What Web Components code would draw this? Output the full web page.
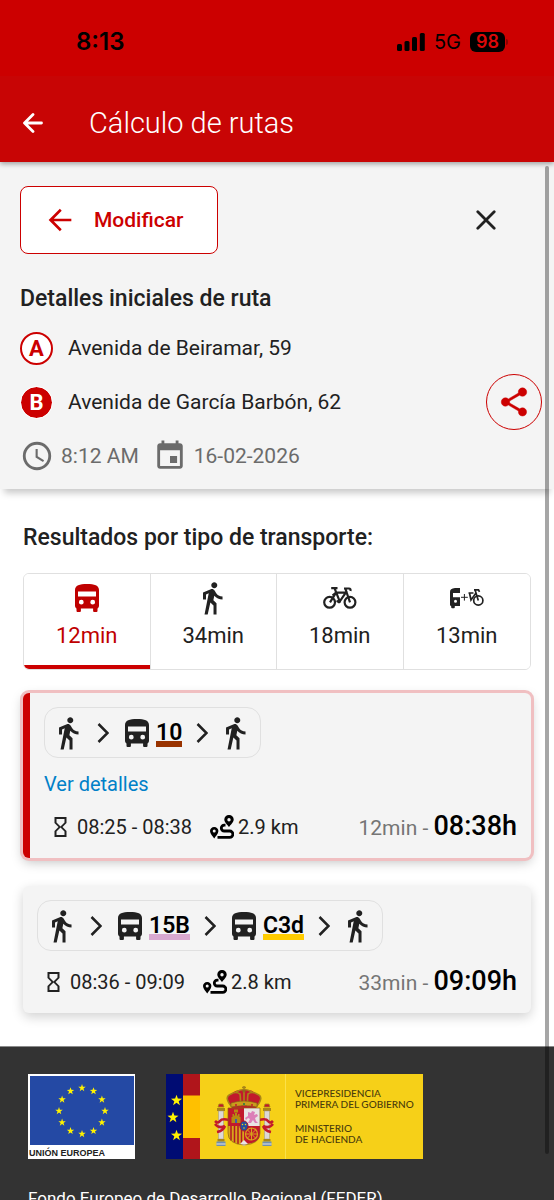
<!DOCTYPE html>
<html lang="es">
<head>
<meta charset="utf-8">
<meta name="viewport" content="width=device-width, initial-scale=1">
<title>Cálculo de rutas</title>
<style>
  html, body {
    height: 100%;
    margin: 0;
  }
  body {
    font-family: Roboto, "Liberation Sans", sans-serif;
    color: #212121;
    background: #ffffff;
    --rojo: #cc0000;
    --gris: #f4f4f4;
    --linea: #e0e0e0;
  }
</style>
</head>
<body>

<rutas-app>
  <barra-estado slot="cabecera"></barra-estado>
  <barra-titulo slot="cabecera">Cálculo de rutas</barra-titulo>

  <detalles-ruta>
    <span slot="origen">Avenida de Beiramar, 59</span>
    <span slot="destino">Avenida de García Barbón, 62</span>
    <span slot="hora">8:12 AM</span>
    <span slot="fecha">16-02-2026</span>
  </detalles-ruta>

  <resultados-ruta>
    <span slot="titulo">Resultados por tipo de transporte:</span>
    <tipo-transporte slot="tipos" icono="bus" activo>12min</tipo-transporte>
    <tipo-transporte slot="tipos" icono="andar">34min</tipo-transporte>
    <tipo-transporte slot="tipos" icono="bici">18min</tipo-transporte>
    <tipo-transporte slot="tipos" icono="busbici">13min</tipo-transporte>

    <tarjeta-ruta activa>
      <icono-ruta slot="tramos" nombre="andar"></icono-ruta>
      <icono-ruta slot="tramos" nombre="siguiente"></icono-ruta>
      <linea-bus slot="tramos" color="#993300">10</linea-bus>
      <icono-ruta slot="tramos" nombre="siguiente"></icono-ruta>
      <icono-ruta slot="tramos" nombre="andar"></icono-ruta>
      <enlace-detalles slot="enlace">Ver detalles</enlace-detalles>
      <span slot="horario">08:25 - 08:38</span>
      <span slot="distancia">2.9 km</span>
      <span slot="duracion">12min</span>
      <span slot="llegada">08:38h</span>
    </tarjeta-ruta>

    <tarjeta-ruta>
      <icono-ruta slot="tramos" nombre="andar"></icono-ruta>
      <icono-ruta slot="tramos" nombre="siguiente"></icono-ruta>
      <linea-bus slot="tramos" color="#d8a8d0">15B</linea-bus>
      <icono-ruta slot="tramos" nombre="siguiente"></icono-ruta>
      <linea-bus slot="tramos" color="#ffcc00">C3d</linea-bus>
      <icono-ruta slot="tramos" nombre="siguiente"></icono-ruta>
      <icono-ruta slot="tramos" nombre="andar"></icono-ruta>
      <span slot="horario">08:36 - 09:09</span>
      <span slot="distancia">2.8 km</span>
      <span slot="duracion">33min</span>
      <span slot="llegada">09:09h</span>
    </tarjeta-ruta>
  </resultados-ruta>

  <pie-pagina>
    <logo-europa slot="logos">UNIÓN EUROPEA</logo-europa>
    <logo-gobierno slot="logos">
      <span slot="arriba">VICEPRESIDENCIA<br>PRIMERA DEL GOBIERNO</span>
      <span slot="abajo">MINISTERIO<br>DE HACIENDA</span>
    </logo-gobierno>
    Fondo Europeo de Desarrollo Regional (FEDER)
  </pie-pagina>
</rutas-app>

<script>
// Dibujos: ancho, alto, viewBox y contenido
const ICONOS = {
  atras: [20, 20, '0 0 20 20', '<path d="M18.500 10H2M10 1.500L1.500 10l8.500 8.500" fill="none" stroke="currentColor" stroke-width="2.800" stroke-linecap="round" stroke-linejoin="round"/>'],
  volver: [34, 34, '0 0 24 24', '<path d="M20 11.100H7.600l5.600-5.700L11.900 4 4 12l7.900 8 1.300-1.400-5.600-5.700H20z"/>'],
  cerrar: [20, 20, '0 0 20 20', '<path d="M1.800 1.800l16.400 16.400M18.200 1.800L1.800 18.200" fill="none" stroke="currentColor" stroke-width="2.800" stroke-linecap="round"/>'],
  compartir: [34, 34, '0 0 24 24', '<path d="M18 16.080c-.760 0-1.440.300-1.960.770L8.910 12.700c.050-.230.090-.460.090-.700s-.040-.470-.090-.700l7.050-4.110c.540.500 1.250.810 2.040.810 1.660 0 3-1.340 3-3s-1.340-3-3-3-3 1.340-3 3c0 .240.040.470.090.700L8.040 9.810C7.500 9.310 6.790 9 6 9c-1.660 0-3 1.340-3 3s1.340 3 3 3c.790 0 1.500-.310 2.040-.810l7.120 4.160c-.050.210-.080.430-.080.650 0 1.610 1.310 2.920 2.920 2.920s2.920-1.310 2.920-2.920-1.310-2.920-2.920-2.920z" stroke="currentColor" stroke-width="0.300"/>'],
  reloj: [34, 34, '0 0 24 24', '<path d="M12 2a10 10 0 1 0 0 20 10 10 0 0 0 0-20zm0 18a8 8 0 1 1 0-16 8 8 0 0 1 0 16z"/><path d="M12.500 7H11v6l5.250 3.150.75-1.230-4.500-2.670z"/>'],
  calendario: [34, 34, '0 0 24 24', '<path d="M17 12h-5v5h5v-5zM16 1v2H8V1H6v2H5c-1.110 0-1.990.9-1.990 2L3 19c0 1.100.89 2 2 2h14c1.100 0 2-.9 2-2V5c0-1.100-.9-2-2-2h-1V1h-2zm3 18H5V8h14v11z"/>'],
  andar: [20, 36, '6 0 13.300 24', '<path d="M13.500 5.500c1.100 0 2-.9 2-2s-.9-2-2-2-2 .9-2 2 .9 2 2 2zM9.800 8.900L7 23h2.100l1.800-8 2.100 2v6h2v-7.500l-2.100-2 .6-3C14.800 12 16.800 13 19 13v-2c-1.900 0-3.500-1-4.300-2.400l-1-1.600c-.4-.6-1-1-1.700-1-.3 0-.5.1-.8.1L6 8.300V13h2V9.600l1.800-.7"/>'],
  bus: [24, 28, '0 0 24 28', '<path fill-rule="evenodd" d="M0 6C0 1.500 4.500 0 12 0s12 1.500 12 6v15.500c0 1.500-.6 2.300-1.500 3V27q0 1-1 1h-2.400q-1 0-1-1v-2.500H5.900V27q0 1-1 1H2.500q-1 0-1-1v-2.500C.6 23.800 0 23 0 21.500zM3 7.500v5h18v-5zM6.300 15.800a2.400 2.400 0 1 0 0 4.800 2.400 2.400 0 0 0 0-4.800zM17.700 15.800a2.400 2.400 0 1 0 0 4.800 2.400 2.400 0 0 0 0-4.800z"/>'],
  bici: [34, 36, '0 -7 34 36', '<g fill="none" stroke="currentColor" stroke-width="2.200"><circle cx="6.600" cy="15.300" r="5.400"/><circle cx="27" cy="15.300" r="5.400"/><path d="M8.200 1.200h6.300M11.500 1.200l5.200 13.200M7 15.300L13 5.600h9.800L16.500 14.800 13.500 14M21 1.500h5q1.800 0 1.500 2.500M22.300 1.500L27 15.300M13 5.600L9.500 8.500"/></g><circle cx="16" cy="14.600" r="1.800"/>'],
  busbici: [34, 36, '0 -7 34 36', '<path fill-rule="evenodd" d="M10 1H5C1.500 1.300 0 2.500 0 5v12.500c0 .8.500 1.300 1.200 1.800v1q0 1 1 1h1.600q1 0 1-1V19H10zM3 6H10v4.300H3zM5.500 12.700a1.500 1.500 0 1 0 0 3 1.500 1.500 0 0 0 0-3z"/><path d="M11 10.300h6.800M14.400 7v6.600" stroke="currentColor" stroke-width="1"/><g fill="none" stroke="currentColor" stroke-width="1.700"><circle cx="28.300" cy="13.500" r="4.600"/><path d="M18.500 6h5M19.500 6l1.500 7 5-7M24 2.800h4.500l1 2M25 2.800l3.300 10.700"/></g>'],
  siguiente: [12, 20, '0 0 12 20', '<path d="M1.500 1l9 9-9 9" fill="none" stroke="currentColor" stroke-width="2.500"/>'],
  espera: [13, 20, '6 2 12 20', '<path d="M6 2v6l4 4-4 4v6h12v-6l-4-4 4-4V2zm10 14.500V20H8v-3.500l4-4zm-4-5l-4-4V4h8v3.500z"/>'],
  recorrido: [24, 24, '0 0 24 24', '<path fill-rule="evenodd" d="M19 0a4.600 4.600 0 0 1 4.700 4.600C23.700 7.500 20.500 10 19 12c-1.500-2-4.700-4.500-4.700-7.400A4.600 4.600 0 0 1 19 0zm0 3a1.700 1.700 0 1 0 0 3.400A1.700 1.700 0 0 0 19 3zM4.200 12a4.100 4.100 0 0 1 4.200 4.100C8.400 18.600 5.600 21.500 4.200 23.500 2.800 21.500 0 18.600 0 16.100A4.100 4.100 0 0 1 4.200 12zm0 2.600a1.500 1.500 0 1 0 0 3 1.500 1.500 0 0 0 0-3z"/><path d="M15.500 10.200h-1.300a2.900 2.900 0 0 0 0 5.800h5.500a3.200 3.200 0 0 1 0 6.400H7.500" fill="none" stroke="currentColor" stroke-width="2.800"/>']
};

function dibujar(nombre) {
  const [ancho, alto, caja, dibujo] = ICONOS[nombre];
  return `<svg width="${ancho}" height="${alto}" viewBox="${caja}" fill="currentColor" aria-hidden="true">${dibujo}</svg>`;
}

// Estrella de cinco puntas centrada en x, y
function estrella(x, y, radio) {
  const puntos = [];
  for (let i = 0; i < 10; i++) {
    const r = i % 2 ? radio * 0.4 : radio;
    const a = -Math.PI / 2 + i * Math.PI / 5;
    puntos.push((x + r * Math.cos(a)).toFixed(2) + ',' + (y + r * Math.sin(a)).toFixed(2));
  }
  return `<polygon points="${puntos.join(' ')}" fill="#fff200"/>`;
}


class IconoRuta extends HTMLElement {
  constructor() {
    super();
    this.attachShadow({ mode: 'open' });
  }

  connectedCallback() {
    this.shadowRoot.innerHTML = `
      <style>
        :host { display: inline-flex; flex: none; }
        :host([slot="tramos"][nombre="andar"]) { padding: 0 4px; }
        svg { display: block; }
      </style>
      ${dibujar(this.getAttribute('nombre'))}`;
  }
}
customElements.define('icono-ruta', IconoRuta);


class RutasApp extends HTMLElement {
  constructor() {
    super();
    this.attachShadow({ mode: 'open' }).innerHTML = `
      <style>
        :host {
          display: flex;
          flex-direction: column;
          height: 100vh;
          overflow: hidden;
        }
        header {
          position: relative;
          z-index: 1;
          box-shadow: 0 2px 5px rgba(0, 0, 0, 0.35);
        }
        main {
          flex: 1;
          min-height: 0;
          overflow: hidden;
          position: relative;
        }
        .barra {
          position: absolute;
          top: 4px;
          right: 5px;
          bottom: 46px;
          width: 4px;
          border-radius: 2px;
          background: rgba(0, 0, 0, 0.35);
          z-index: 2;
        }
      </style>
      <header><slot name="cabecera"></slot></header>
      <main>
        <slot></slot>
        <div class="barra"></div>
      </main>`;
  }
}
customElements.define('rutas-app', RutasApp);


class BarraEstado extends HTMLElement {
  constructor() {
    super();
    this.attachShadow({ mode: 'open' }).innerHTML = `
      <style>
        :host {
          display: flex;
          align-items: center;
          justify-content: space-between;
          box-sizing: border-box;
          height: 76px;
          padding: 7px 46px 0 76px;
          background: #cc0000;
          color: #000000;
          font-family: Inter, sans-serif;
        }
        .hora { font-size: 24px; font-weight: 600; }
        .estado { display: flex; align-items: center; }
        .red { font-size: 20px; margin: 0 9px; }
        .bateria {
          width: 35px;
          border-radius: 6px;
          background: #000000;
          color: #dc0808;
          font-size: 18px;
          font-weight: 600;
          line-height: 20px;
          text-align: center;
        }
        .polo {
          width: 2px;
          height: 6px;
          margin-left: 1px;
          border-radius: 0 2px 2px 0;
          background: #8c0000;
        }
      </style>
      <span class="hora">8:13</span>
      <div class="estado">
        <svg width="28" height="18" viewBox="0 0 28 18" aria-hidden="true">
          <rect x="0" y="11" width="5" height="7" rx="1.500"/>
          <rect x="7.500" y="8" width="5" height="10" rx="1.500"/>
          <rect x="15" y="4" width="5" height="14" rx="1.500"/>
          <rect x="22.800" y="0" width="5" height="18" rx="1.500"/>
        </svg>
        <span class="red">5G</span>
        <span class="bateria">98</span>
        <span class="polo"></span>
      </div>`;
  }
}
customElements.define('barra-estado', BarraEstado);


class BarraTitulo extends HTMLElement {
  constructor() {
    super();
    this.attachShadow({ mode: 'open' }).innerHTML = `
      <style>
        :host {
          display: flex;
          align-items: center;
          gap: 46px;
          box-sizing: border-box;
          height: 86px;
          padding: 7px 23px 0;
          background: #c80505;
          color: #ffffff;
        }
        button {
          display: flex;
          padding: 0;
          border: 0;
          background: none;
          color: inherit;
        }
        h1 {
          margin: 0;
          font-size: 29px;
          font-weight: 300;
          line-height: 36px;
        }
      </style>
      <button aria-label="Atrás"><icono-ruta nombre="atras"></icono-ruta></button>
      <h1><slot></slot></h1>`;
  }
}
customElements.define('barra-titulo', BarraTitulo);


class DetallesRuta extends HTMLElement {
  constructor() {
    super();
    this.attachShadow({ mode: 'open' }).innerHTML = `
      <style>
        :host {
          display: block;
          padding: 24px 12px 6px 20px;
          background: var(--gris);
          box-shadow: 0 8px 7px -4px rgba(0, 0, 0, 0.22);
          font-size: 21px;
        }
        button {
          display: flex;
          align-items: center;
          justify-content: center;
          box-sizing: border-box;
          font: inherit;
          cursor: pointer;
        }
        .arriba {
          display: flex;
          align-items: center;
          justify-content: space-between;
        }
        .modificar {
          gap: 17px;
          height: 68px;
          padding: 0 34px 0 22px;
          border: 1px solid var(--rojo);
          border-radius: 8px;
          background: #ffffff;
          color: var(--rojo);
          font-weight: 500;
        }
        .cerrar {
          width: 48px;
          height: 48px;
          margin-right: 32px;
          padding: 0;
          border: 0;
          background: none;
          color: #212121;
        }
        h2 {
          margin: 31px 0 8px;
          font-size: 23px;
          font-weight: 500;
          line-height: 28px;
        }
        .fila {
          display: flex;
          align-items: center;
          height: 54px;
        }
        .punto {
          box-sizing: border-box;
          width: 33px;
          height: 33px;
          margin-right: 15px;
          border: 2px solid var(--rojo);
          border-radius: 50%;
          background: #ffffff;
          color: var(--rojo);
          font-size: 22px;
          font-weight: 700;
          line-height: 30px;
          text-align: center;
        }
        .destino {
          border: 1px solid #ffffff;
          background: var(--rojo);
          background-clip: padding-box;
          color: #ffffff;
          line-height: 31px;
        }
        .compartir {
          width: 56px;
          height: 56px;
          margin-left: auto;
          padding: 0;
          border: 1px solid var(--rojo);
          border-radius: 50%;
          background: none;
          color: var(--rojo);
        }
        .cuando {
          gap: 7px;
          color: #6b6b6b;
        }
        .dia { margin-left: 7px; }
      </style>
      <div class="arriba">
        <button class="modificar"><icono-ruta nombre="volver"></icono-ruta>Modificar</button>
        <button class="cerrar" aria-label="Cerrar"><icono-ruta nombre="cerrar"></icono-ruta></button>
      </div>
      <h2>Detalles iniciales de ruta</h2>
      <div class="fila"><span class="punto">A</span><slot name="origen"></slot></div>
      <div class="fila">
        <span class="punto destino">B</span><slot name="destino"></slot>
        <button class="compartir" aria-label="Compartir"><icono-ruta nombre="compartir"></icono-ruta></button>
      </div>
      <div class="fila cuando">
        <icono-ruta nombre="reloj"></icono-ruta><slot name="hora"></slot>
        <icono-ruta class="dia" nombre="calendario"></icono-ruta><slot name="fecha"></slot>
      </div>`;
  }
}
customElements.define('detalles-ruta', DetallesRuta);


class ResultadosRuta extends HTMLElement {
  constructor() {
    super();
    this.attachShadow({ mode: 'open' }).innerHTML = `
      <style>
        :host {
          display: block;
          padding: 35px 23px 33px;
        }
        h2 {
          margin: 0 0 21px;
          font-size: 23px;
          font-weight: 500;
          line-height: 28px;
        }
        nav {
          display: grid;
          grid-template-columns: repeat(4, 1fr);
          border: 1px solid var(--linea);
          border-radius: 6px;
          overflow: hidden;
          margin-bottom: 23px;
        }
        .lista {
          display: grid;
          gap: 28px;
        }
      </style>
      <h2><slot name="titulo"></slot></h2>
      <nav><slot name="tipos"></slot></nav>
      <div class="lista"><slot></slot></div>`;
  }
}
customElements.define('resultados-ruta', ResultadosRuta);


class TipoTransporte extends HTMLElement {
  constructor() {
    super();
    this.attachShadow({ mode: 'open' });
  }

  connectedCallback() {
    this.shadowRoot.innerHTML = `
      <style>
        :host { display: block; border-right: 1px solid var(--linea); }
        :host(:last-of-type) { border-right: 0; }
        button {
          display: flex;
          flex-direction: column;
          align-items: center;
          box-sizing: border-box;
          width: 100%;
          height: 95px;
          padding: 6px 0 0;
          border: 0;
          border-bottom: 4px solid transparent;
          background: #ffffff;
          color: #212121;
          font: inherit;
          font-size: 22px;
          line-height: 28px;
          cursor: pointer;
        }
        :host([activo]) button {
          color: #bf0000;
          border-bottom-color: var(--rojo);
        }
        .icono {
          display: flex;
          align-items: center;
          height: 36px;
          margin-bottom: 6px;
        }
      </style>
      <button>
        <span class="icono"><icono-ruta nombre="${this.getAttribute('icono')}"></icono-ruta></span>
        <slot></slot>
      </button>`;
  }
}
customElements.define('tipo-transporte', TipoTransporte);


class LineaBus extends HTMLElement {
  constructor() {
    super();
    this.attachShadow({ mode: 'open' });
  }

  connectedCallback() {
    this.shadowRoot.innerHTML = `
      <style>
        :host {
          display: flex;
          align-items: center;
          gap: 7px;
          padding-left: 2px;
        }
        .linea {
          margin-top: 7px;
          border-bottom: 6px solid ${this.getAttribute('color')};
          color: #000000;
          font-size: 23px;
          font-weight: 600;
          line-height: 16px;
        }
      </style>
      <icono-ruta nombre="bus"></icono-ruta>
      <span class="linea"><slot></slot></span>`;
  }
}
customElements.define('linea-bus', LineaBus);


class EnlaceDetalles extends HTMLElement {
  constructor() {
    super();
    this.attachShadow({ mode: 'open' }).innerHTML = `
      <style>
        :host { display: block; margin-top: 14px; line-height: 24px; }
        a { color: #0080c8; text-decoration: none; }
      </style>
      <a href="#detalles"><slot></slot></a>`;
  }
}
customElements.define('enlace-detalles', EnlaceDetalles);


class TarjetaRuta extends HTMLElement {
  constructor() {
    super();
    this.attachShadow({ mode: 'open' }).innerHTML = `
      <style>
        :host {
          display: block;
          padding: 14px;
          border-radius: 6px;
          background: var(--gris);
          box-shadow: 0 4px 12px rgba(0, 0, 0, 0.18);
          font-size: 20px;
        }
        :host([activa]) {
          border-left: 7px solid var(--rojo);
          box-shadow: 0 0 0 3px #f0bfc1, 0 4px 12px rgba(0, 0, 0, 0.25);
        }
        .tramos {
          display: inline-flex;
          align-items: center;
          gap: 14px;
          box-sizing: border-box;
          height: 51px;
          padding: 0 10px;
          border: 1px solid var(--linea);
          border-radius: 14px;
          vertical-align: top;
        }
        .datos {
          display: flex;
          align-items: center;
          height: 34px;
          margin-top: 14px;
          padding-left: 10px;
        }
        .espera { margin-right: 10px; }
        .recorrido { margin: 0 4px 0 18px; color: #000000; }
        .total {
          align-self: flex-start;
          margin-left: auto;
          color: #757575;
          font-size: 21px;
          line-height: 32px;
        }
        strong {
          color: #000000;
          font-size: 27px;
          font-weight: 500;
        }
      </style>
      <div class="tramos"><slot name="tramos"></slot></div>
      <slot name="enlace"></slot>
      <div class="datos">
        <icono-ruta class="espera" nombre="espera"></icono-ruta>
        <slot name="horario"></slot>
        <icono-ruta class="recorrido" nombre="recorrido"></icono-ruta>
        <slot name="distancia"></slot>
        <div class="total"><slot name="duracion"></slot> - <strong><slot name="llegada"></slot></strong></div>
      </div>`;
  }
}
customElements.define('tarjeta-ruta', TarjetaRuta);


class PiePagina extends HTMLElement {
  constructor() {
    super();
    this.attachShadow({ mode: 'open' }).innerHTML = `
      <style>
        :host {
          display: block;
          padding: 27px 28px;
          border-top: 1px solid #8a8a8a;
          background: #333333;
          color: #ffffff;
          font-size: 17px;
          line-height: 24px;
        }
        .logos {
          display: flex;
          gap: 31px;
          margin-bottom: 27px;
        }
      </style>
      <div class="logos"><slot name="logos"></slot></div>
      <slot></slot>`;
  }
}
customElements.define('pie-pagina', PiePagina);


class LogoEuropa extends HTMLElement {
  constructor() {
    super();
    this.attachShadow({ mode: 'open' });
  }

  connectedCallback() {
    let estrellas = '';
    for (let i = 0; i < 12; i++) {
      const a = i * Math.PI / 6;
      estrellas += estrella(52 + 23 * Math.sin(a), 35 - 23 * Math.cos(a), 3.9);
    }
    this.shadowRoot.innerHTML = `
      <style>
        :host {
          display: block;
          box-sizing: border-box;
          width: 107px;
          height: 85px;
          padding: 2px 1px 0;
          background: #ffffff;
          color: #222222;
          font: bold 9px "Liberation Sans", sans-serif;
          line-height: 15px;
        }
        svg { display: block; background: #2449a4; margin: 0 0 1px 1px; }
      </style>
      <svg width="104" height="69" viewBox="0 0 104 69" aria-hidden="true">${estrellas}</svg>
      <slot></slot>`;
  }
}
customElements.define('logo-europa', LogoEuropa);


class LogoGobierno extends HTMLElement {
  constructor() {
    super();
    this.attachShadow({ mode: 'open' });
  }

  connectedCallback() {
    this.shadowRoot.innerHTML = `
      <style>
        :host {
          display: flex;
          box-sizing: border-box;
          width: 257px;
          height: 85px;
          background: #f6d018;
          color: #4a3c0c;
          font-family: Lato, sans-serif;
          font-size: 10px;
          font-weight: 500;
          line-height: 11px;
        }
        svg { flex: none; }
        .texto {
          display: flex;
          flex-direction: column;
          justify-content: center;
          gap: 13px;
          padding-left: 9px;
          border-left: 1px solid #fbe14a;
          white-space: nowrap;
        }
      </style>
      <svg width="119" height="85" viewBox="0 0 119 85" aria-hidden="true">
        <rect width="17" height="85" fill="#000c73"/>
        ${estrella(10.5, 26.5, 5.8)}${estrella(7, 43.5, 5.8)}${estrella(10.5, 61.5, 5.8)}
        <rect x="17" width="17" height="85" fill="#b0151b"/>
        <rect x="17" y="21.500" width="17" height="42.500" fill="#ffc000"/>
        ${this.columna(50)}${this.columna(96)}
        <g fill="none" stroke="#c2192c" stroke-width="2.600">
          <path d="M63 46q-7-2-9 1t-5 0M49 50q4 5 10 2M59 52q-2 5-8 6"/>
          <path d="M93 46q7-2 9 1t5 0M107 50q-4 5-10 2M97 52q2 5 8 6"/>
        </g>
        <path d="M66 34q-9-11-1-14 6-5 13-4 7-1 13 4 8 3-1 14z" fill="#c2192c"/>
        <g fill="none" stroke="#a98517" stroke-width="1.600">
          <path d="M66 33q-9-10-1-13 5-3 9 0 1 7 0 12M90 33q9-10 1-13-5-3-9 0-1 7 0 12M78 17v15M70 18q8-5 16 0"/>
          <path d="M78 12v5M76 13.500h4"/>
        </g>
        <path d="M65 29q13-4 26 0v4q-13-3-26 0z" fill="#c99b1d" stroke="#7e5f12" stroke-width="0.600"/>
        <circle cx="78" cy="17" r="1.600" fill="#8b6d18"/>
        <circle cx="70" cy="31" r="1" fill="#c2192c"/>
        <circle cx="78" cy="30" r="1" fill="#1d7a4b"/>
        <circle cx="86" cy="31" r="1" fill="#c2192c"/>
        <path d="M62 34h16v18H62z" fill="#c2192c"/>
        <path d="M78 34h16v18H78z" fill="#e9e4e4"/>
        <path d="M62 52h16v18q-16 0-16-11z" fill="#d8a51b"/>
        <path d="M94 52H78v18q16 0 16-11z" fill="#c2192c"/>
        <path d="M65.500 49h9v-6h-1v-3h-1.500v1.500h-1V38h-2v3.500h-1V40h-1.500v3h-1zM68 35.500h4v3h-4z" fill="#b58a12"/>
        <path d="M69 49v-4h2v4z" fill="#3f5ea8"/>
        <path d="M82 38l3 1 1-2 3 1-1 3 3-1 1 2-3 2 1 3 2 2h-3l-2-3-2 3h-3l2-4-2-1-2 2-1-2 3-2z" fill="#dc7fb8"/>
        <path d="M65 52v14.500M68.500 52v16.500M72 52v18M75.500 52v18" stroke="#b01726" stroke-width="1.500"/>
        <circle cx="85.500" cy="60" r="6" fill="none" stroke="#d8a51b" stroke-width="1.200"/>
        <path d="M79.500 60h12M85.500 54v12M81.300 55.800l8.400 8.400M89.700 55.800l-8.400 8.400" stroke="#d8a51b"/>
        <path d="M74 70l4-4 4 4-4 2z" fill="#e9e4e4"/>
        <path d="M62 34h32v25q0 11-16 12-16-1-16-12z" fill="none" stroke="#8a6413" stroke-width="0.700"/>
        <ellipse cx="78" cy="52" rx="4" ry="5" fill="#24509c" stroke="#b01726" stroke-width="1"/>
        <path d="M76.500 50.500h0M79.500 50.500h0M78 54h0" stroke="#f6d018" stroke-width="1.500" stroke-linecap="round"/>
      </svg>
      <div class="texto">
        <slot name="arriba"></slot>
        <slot name="abajo"></slot>
      </div>`;
  }

  // Columna de Hércules con su corona y base
  columna(x) {
    return `
      <g transform="translate(${x} 0)">
        <path d="M2 33l1-3h4l1 3z" fill="#c2192c" stroke="#a98517" stroke-width="0.800"/>
        <rect x="1" y="34" width="8" height="3" fill="#a98517"/>
        <rect x="2.500" y="37" width="5" height="28" fill="#dcd8d6" stroke="#9c9384" stroke-width="0.500"/>
        <rect x="1.500" y="65" width="7" height="2.500" fill="#a98517"/>
        <rect x="0.500" y="67.500" width="9" height="4.500" fill="#6f8fae"/>
        <path d="M0.500 70h9" stroke="#e9e4e4"/>
      </g>`;
  }
}
customElements.define('logo-gobierno', LogoGobierno);
</script>
</body>
</html>
